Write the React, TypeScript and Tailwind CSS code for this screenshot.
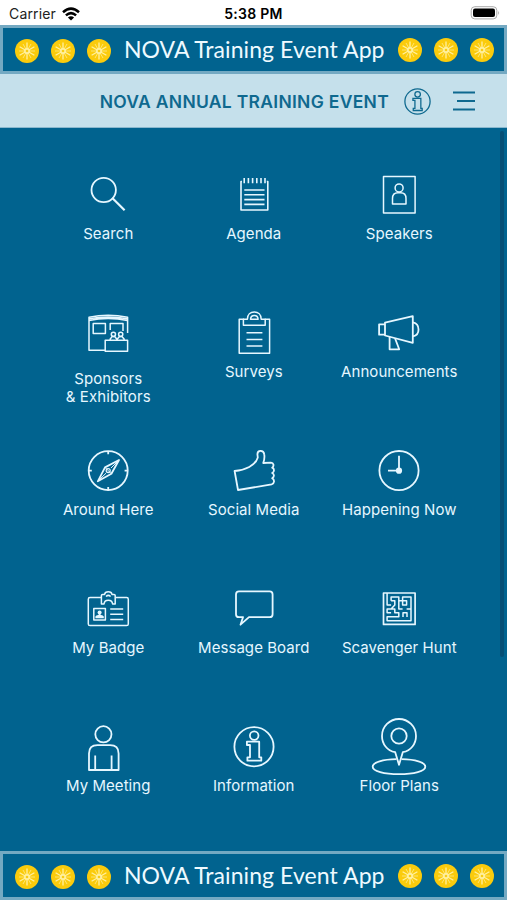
import React from "react";

type Tile = { label: React.ReactNode; icon: React.ReactNode; low?: boolean };

const InfoGlyph = () => (
  <>
    <circle cx="30" cy="30.7" r="19.6" />
    <circle cx="30.2" cy="19.6" r="4.3" />
    <path d="M22.9 25.7H35.2V41.3H37.3V44.7H23.4V41.3H26V29H22.9Z" />
  </>
);

const tiles: Tile[] = [
  {
    label: "Search",
    icon: (
      <>
        <circle cx="25.7" cy="26" r="12.2" />
        <path strokeWidth="2.2" d="M34.3 34L46.6 46.3" />
      </>
    ),
  },
  {
    label: "Agenda",
    icon: (
      <g strokeWidth="1.6">
        <path d="M18 17.5H17V46H43.8V17.5H42.8" />
        <path d="M20.2 14V19.3M24.4 14V19.3M28.6 14V19.3M32.8 14V19.3M37 14V19.3M41 14V19.3" />
        <path d="M20.3 26H40.5M20.3 30.8H40.5M20.3 35.6H40.5M20.3 40.4H40.5" />
      </g>
    ),
  },
  {
    label: "Speakers",
    icon: (
      <g strokeWidth="1.5">
        <rect x="14.5" y="12.6" width="31.6" height="36.4" />
        <circle cx="30.1" cy="23.9" r="4" />
        <path d="M23.5 40V34.5Q23.5 28.8 29 28.8H31.5Q37 28.8 37 34.5V40Z" />
      </g>
    ),
  },
  {
    label: (
      <>
        Sponsors
        <br />& Exhibitors
      </>
    ),
    low: true,
    icon: (
      <g strokeWidth="1.5">
        <path d="M27 48.3H11V15.2Q30 11.4 49.6 15.2V31" />
        <path d="M11 18.4Q30 14.6 49.6 18.4M11 16.8Q30 13 49.6 16.8" />
        <rect x="15.2" y="21.4" width="12.2" height="10.2" />
        <path d="M32.2 28V21.4H45V29" />
        <circle cx="35.4" cy="32.3" r="2.1" />
        <circle cx="42.7" cy="32.3" r="2.1" />
        <path d="M32.2 38.5V37L34.3 34.4H36.6L38.8 37V38.5M39.3 38.5V37L41.5 34.4H43.9L46.1 37V38.5" />
        <rect x="27.2" y="38.2" width="22.4" height="11.1" />
      </g>
    ),
  },
  {
    label: "Surveys",
    icon: (
      <g strokeWidth="1.5">
        <path d="M20 17.2H15.2V51.2H45.6V17.2H40.8" />
        <path d="M19.4 17.2H23.4C23.4 12.5 26.5 10 30.3 10S37.2 12.5 37.2 17.2H41.2V23.3H19.4Z" />
        <path d="M26.5 17.2Q26.8 13.4 30.3 13.4T34.1 17.2Z" />
        <path d="M22.5 30.7H38.4M22.5 37.4H38.4M22.5 44H38.4" />
      </g>
    ),
  },
  {
    label: "Announcements",
    icon: (
      <>
        <path d="M16 22.3H10.1V32.7H16" />
        <path d="M16 20.7L43.8 14.2V40.8L16 33.5Z" />
        <path d="M44 20.4A7.2 7.2 0 0 1 44 34.4" />
        <path d="M20.6 34.7V47.3H30.2L26 36.2" />
      </>
    ),
  },
  {
    label: "Around Here",
    icon: (
      <>
        <circle cx="30.2" cy="30.6" r="19.5" />
        <path d="M30.2 11V14.2M30.2 47V50.2M10.6 30.6H13.8M46.6 30.6H49.8" />
        <path d="M41 20L27 27.4L19.8 41.3L33.4 33.8Z" />
        <path strokeWidth="1" d="M40.5 20.5L33 28M20.2 40.8L28 33.2M27 27.4L33.4 33.8" />
        <circle cx="30.2" cy="30.6" r="2" strokeWidth="1.2" />
      </>
    ),
  },
  {
    label: "Social Media",
    icon: (
      <path d="M10.6 31C21 30.2 31.5 25.5 33.8 17.5L33.4 14.2C33.4 9.8 39.6 9.6 40.2 14.2C40.8 17.5 40.4 20 39.2 23L47 22.6C49.6 22.6 50.4 25.8 48.2 27.6C50.6 28.6 50.6 31.6 48.2 33C50.6 34.2 50.4 37 48.2 38.2C51 39.8 50.4 43.8 47.6 44.4L14 50Z" />
    ),
  },
  {
    label: "Happening Now",
    icon: (
      <>
        <circle cx="30" cy="30.6" r="19.6" />
        <path d="M30 30.7V15.7M30 30.7H19" />
        <circle cx="30" cy="30.7" r="3.1" fill="currentColor" stroke="none" />
      </>
    ),
  },
  {
    label: "My Badge",
    icon: (
      <g strokeWidth="1.5">
        <path d="M23 19.5H12Q10.3 19.5 10.3 21.2V45.9Q10.3 47.6 12 47.6H48.6Q50.3 47.6 50.3 45.9V21.2Q50.3 19.5 48.6 19.5H37.6" />
        <path d="M23.4 26V17.5Q23.4 16.4 24.6 16.4H26.6Q27 13.8 30.3 13.8T34 16.4H36Q37.2 16.4 37.2 17.5V26H34.6Q34.2 22.3 30.3 22.3T26 26Z" />
        <path d="M28 18.5Q30.3 16.3 32.6 18.5" />
        <rect x="15.8" y="30.5" width="11.6" height="11.6" />
        <circle cx="21.6" cy="34.4" r="2" fill="currentColor" stroke="none" />
        <path d="M17.4 40.2V38.4Q18 37.3 20.2 37L21.6 35.5L23 37Q25.2 37.3 25.8 38.4V40.2Z" fill="currentColor" stroke="none" />
        <path d="M32.2 31H45.2M32.2 36.2H45.2M32.2 41.4H45.2" />
      </g>
    ),
  },
  {
    label: "Message Board",
    icon: (
      <path d="M15 13.4H45.6Q48.6 13.4 48.6 16.4V36.2Q48.6 39.2 45.6 39.2H25L16.5 46.7L19 39.2H15Q12 39.2 12 36.2V16.4Q12 13.4 15 13.4Z" />
    ),
  },
  {
    label: "Scavenger Hunt",
    icon: (
      <g strokeWidth="1.5">
        <rect x="14.5" y="15" width="31.6" height="31.4" strokeWidth="1.7" />
        <path d="M18.1 15V27H22.1M22.1 22.7V18.9H29.8V22.7H33.6V27H37.6V22.7H33.6V18.9H42V42.7H18.1V38.7H29.8V34.7H25.8V31H18.1V34.7H22.1M22.1 22.7H25.8V27L22.1 31M29.8 22.7V31H33.6M37.6 31H42M34 39V34.7H38V39" />
      </g>
    ),
  },
  {
    label: "My Meeting",
    icon: (
      <>
        <circle cx="25.4" cy="18.3" r="8.1" />
        <path d="M11 54V37.5Q11 29.2 19.5 29.2H32Q40.6 29.2 40.6 37.5V54Z" />
        <path d="M17.2 39.5V54M33.6 39.5V54" />
      </>
    ),
  },
  { label: "Information", icon: <InfoGlyph /> },
  {
    label: "Floor Plans",
    icon: (
      <>
        <circle cx="30" cy="20" r="7.7" />
        <path d="M30 48.8L26.2 36.2C18 34.5 13 28 13 20A17 17 0 0 1 47 20C47 28 42 34.5 33.8 36.2Z" />
        <path d="M27.5 43.2C14 43.4 3.7 46.3 3.7 50.7S15 58.2 30 58.2S56.3 55.1 56.3 50.7S46 43.4 32.5 43.2" />
      </>
    ),
  },
];

const Coin = () => (
  <svg viewBox="-12 -12 24 24" className="size-6 shrink-0">
    <circle r="12" fill="#fbcb0c" />
    <g stroke="#fff0a0" strokeWidth="1.3">
      <path d="M0 -8.5V8.5M-7.4 -4.2L7.4 4.2M-7.4 4.2L7.4 -4.2" />
      <path strokeWidth=".7" d="M-8 0H8M-4 -7L4 7M-4 7L4 -7" />
    </g>
    <circle r="3" fill="#fff0a0" />
    <circle r="1.3" fill="#f8cd14" />
  </svg>
);

const Coins = () => (
  <div className="flex gap-3">
    <Coin />
    <Coin />
    <Coin />
  </div>
);

const Banner = () => (
  <div className="flex h-[49px] shrink-0 items-center justify-between border-[3px] border-[#74a9c2] bg-[#01638f] pr-[10px] pl-[11.5px]">
    <div className="pt-[2px]">
      <Coins />
    </div>
    <span className="font-['Lato',sans-serif] text-[23px] leading-none tracking-[0.08px] whitespace-nowrap text-[#eefaff]">
      NOVA Training Event App
    </span>
    <Coins />
  </div>
);

export default function App() {
  return (
    <div className="flex h-[900px] w-[507px] flex-col overflow-hidden bg-[#01638f] font-['Inter',sans-serif]">
      <div className="grid h-[25px] shrink-0 grid-cols-3 items-center bg-white px-2 pt-[2px] text-[14px] text-[#222]">
        <div className="flex items-center gap-[6px] pl-px">
          <span className="tracking-[0.15px]">Carrier</span>
          <svg viewBox="0 0 18 14" className="h-[14px] w-[18px]" fill="none" stroke="#000" strokeWidth="2.5">
            <path d="M1 5.2Q9 -2 17 5.2M3.9 8.4Q9 3.8 14.1 8.4" />
            <path d="M9 13.5L5.9 10.4Q9 7.9 12.1 10.4Z" fill="#000" stroke="none" />
          </svg>
        </div>
        <div className="text-center font-semibold tracking-[0.3px] text-black">5:38 PM</div>
        <svg viewBox="0 0 30 14" className="-mr-px mb-px h-[14px] w-[30px] justify-self-end">
          <rect x="1.2" y=".7" width="25.6" height="12.2" rx="3.6" fill="#fff" stroke="#aaa" />
          <rect x="3" y="2.5" width="22" height="8.6" rx="2" fill="#000" />
          <path d="M28.2 4.7Q30 6.8 28.2 8.9Z" fill="#aaa" />
        </svg>
      </div>

      <Banner />

      <div className="flex h-[54px] shrink-0 items-center justify-end border-b border-[#8ab8ce] bg-[#c5e0eb] pt-px pr-[31px] text-[#0f698f]">
        <h1 className="pt-[3px] text-[17.5px] font-semibold tracking-[0.29px] whitespace-nowrap">
          NOVA ANNUAL TRAINING EVENT
        </h1>
        <svg viewBox="9 9.7 42 42" className="ml-[15px] h-[27px] w-[27px]" fill="none" stroke="currentColor" strokeWidth="2">
          <InfoGlyph />
        </svg>
        <svg viewBox="0 0 24 20" className="ml-[21px] h-5 w-6" stroke="currentColor" strokeWidth="2">
          <path d="M1 1.5H23M5 10H23M1 18.5H23" />
        </svg>
      </div>

      <div className="flex h-[723px] shrink-0 justify-between">
        <div className="ml-[35.5px] grid h-[726px] w-[436.5px] auto-rows-[138px] grid-cols-3 pt-9">
          {tiles.map((t, i) => (
            <div key={i} className="flex flex-col items-center text-center text-[15px] leading-[18px] text-[#e6f7ff]">
              <svg
                viewBox="0 0 60 60"
                className="size-[60px] shrink-0"
                fill="none"
                stroke="currentColor"
                strokeWidth="1.8"
                strokeLinejoin="round"
              >
                {t.icon}
              </svg>
              <span className={t.low ? "pt-2 tracking-[0.1px] whitespace-nowrap" : "pt-px tracking-[0.06px] whitespace-nowrap"}>
                {t.label}
              </span>
            </div>
          ))}
        </div>
        <div className="mt-[3px] mr-[3px] h-[526px] w-1 rounded-sm bg-[#064f75]" />
      </div>

      <Banner />
    </div>
  );
}
